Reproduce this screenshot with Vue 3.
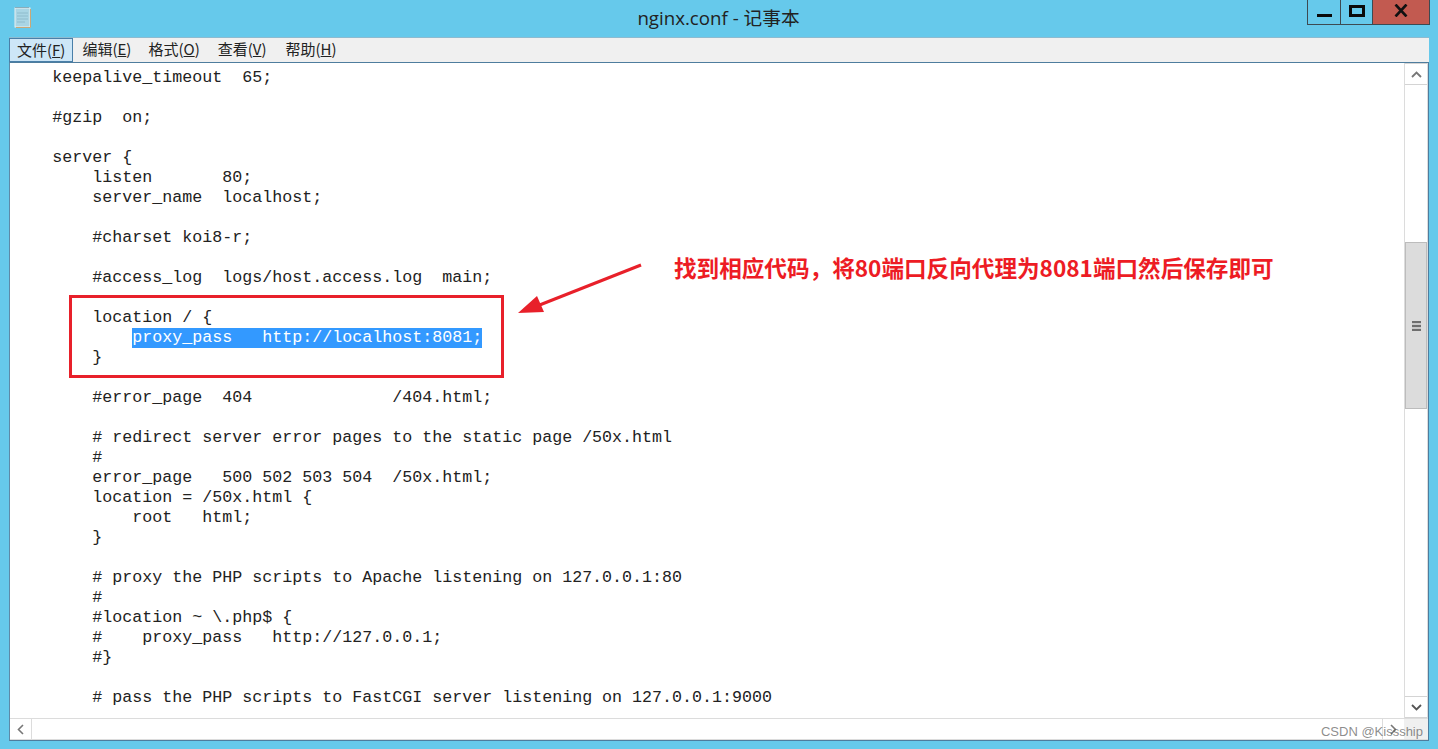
<script setup>
const menus = [
  { zh: '文件', key: 'F', active: true },
  { zh: '编辑', key: 'E' },
  { zh: '格式', key: 'O' },
  { zh: '查看', key: 'V' },
  { zh: '帮助', key: 'H' }
]
const before = [
  '    keepalive_timeout  65;', '', '    #gzip  on;', '', '    server {',
  '        listen       80;', '        server_name  localhost;', '',
  '        #charset koi8-r;', '', '        #access_log  logs/host.access.log  main;', '',
  '        location / {'
]
const indent = '            '
const selected = 'proxy_pass   http://localhost:8081;'
const after = [
  '        }', '', '        #error_page  404              /404.html;', '',
  '        # redirect server error pages to the static page /50x.html',
  '        #', '        error_page   500 502 503 504  /50x.html;',
  '        location = /50x.html {', '            root   html;', '        }', '',
  '        # proxy the PHP scripts to Apache listening on 127.0.0.1:80',
  '        #', '        #location ~ \\.php$ {', '        #    proxy_pass   http://127.0.0.1;',
  '        #}', '', '        # pass the PHP scripts to FastCGI server listening on 127.0.0.1:9000'
]
</script>

<template>
  <div class="window">
    <header class="titlebar">
      <svg class="app-icon" width="20" height="24" viewBox="0 0 20 24">
        <rect x="2" y="3" width="15" height="19" fill="#a9d5e4" stroke="#e9f0ef" />
        <path d="M17.500 4v18.500H3" fill="none" stroke="#c9a878" />
        <path d="M4 8h11M4 11h11M4 14h11M4 17h8" stroke="#8fbccc" />
        <path d="M3 3v-1M5 3v-1M7 3v-1M9 3v-1M11 3v-1M13 3v-1M15 3v-1" stroke="#6b7f88" />
      </svg>
      <div class="title">nginx.conf - 记事本</div>
      <div class="controls">
        <button class="ctl min"><span class="min-bar"></span></button>
        <button class="ctl max"><span class="max-box"></span></button>
        <button class="ctl close">
          <svg width="14" height="13" viewBox="0 0 14 13"><path d="M1.500 .5L12.500 12.500M12.500 .5L1.500 12.500" stroke="#111" stroke-width="2.600" /></svg>
        </button>
      </div>
    </header>

    <nav class="menubar">
      <div v-for="m in menus" :key="m.key" class="menu" :class="{ active: m.active }">{{ m.zh }}(<u>{{ m.key }}</u>)</div>
    </nav>

    <main class="client">
      <div class="upper">
        <div class="editor">
          <div v-for="(l, i) in before" :key="'b' + i" class="line">{{ l }}</div>
          <div class="line">{{ indent }}<span class="selected">{{ selected }}</span></div>
          <div v-for="(l, i) in after" :key="'a' + i" class="line">{{ l }}</div>
        </div>
        <aside class="vscroll">
          <div class="sb-btn">
            <svg width="11" height="7" viewBox="0 0 11 7"><path d="M1 6l4.500-4.500L10 6" fill="none" stroke="#777" stroke-width="1.800" /></svg>
          </div>
          <div class="v-track">
            <div class="v-thumb"><span class="grip"></span></div>
          </div>
          <div class="sb-btn">
            <svg width="11" height="7" viewBox="0 0 11 7"><path d="M1 1l4.500 4.500L10 1" fill="none" stroke="#555" stroke-width="1.800" /></svg>
          </div>
        </aside>
      </div>
      <div class="hscroll">
        <div class="h-btn">
          <svg width="7" height="11" viewBox="0 0 7 11"><path d="M6 1L1.500 5.500 6 10" fill="none" stroke="#777" stroke-width="1.600" /></svg>
        </div>
        <div class="h-track"></div>
        <div class="h-btn right">
          <svg width="7" height="11" viewBox="0 0 7 11"><path d="M1 1l4.500 4.500L1 10" fill="none" stroke="#777" stroke-width="1.600" /></svg>
        </div>
        <div class="corner"></div>
      </div>
    </main>

    <div class="red-box"></div>
    <svg class="arrow" width="130" height="60" viewBox="0 0 130 60">
      <path d="M125 3L16 46" stroke="#e8202a" stroke-width="3" />
      <path d="M2 51L21 34 28 50Z" fill="#e8202a" />
    </svg>
    <div class="note">找到相应代码，将80端口反向代理为8081端口然后保存即可</div>
    <div class="watermark">CSDN @Kissship</div>
  </div>
</template>

<style>
html, body { margin: 0; padding: 0; overflow: hidden; }
</style>

<style scoped>
.window {
  position: relative;
  width: 1438px;
  height: 749px;
  box-sizing: border-box;
  padding: 0 9px 8px 9px;
  background: #66c9eb;
  display: flex;
  flex-direction: column;
  overflow: hidden;
}
.titlebar { height: 37px; flex: none; position: relative; }
.app-icon { position: absolute; left: 4px; top: 5px; }
.title {
  text-align: center;
  font: 18.700px/36px "Open Sans", "Noto Sans CJK SC", sans-serif;
  color: #222;
  padding-right: 1px;
}
.controls { position: absolute; right: -1px; top: 0; display: flex; height: 25px; }
.ctl {
  box-sizing: border-box;
  height: 25px;
  padding: 0;
  background: transparent;
  border: 1px solid #3d4a52;
  border-top: 0;
  border-left-width: 0;
  display: flex;
  align-items: center;
  justify-content: center;
}
.min { width: 34px; border-left-width: 1px; }
.max { width: 32px; }
.close { width: 57px; background: #c25a50; border-left-width: 0; }
.min-bar { width: 15px; height: 3px; background: #0a0a0a; margin-top: 6px; }
.max-box { width: 16px; height: 12px; box-sizing: border-box; border: 3px solid #0a0a0a; margin-bottom: 3px; }
.close svg { margin-bottom: 4px; }

.menubar {
  flex: none;
  height: 25px;
  background: #f0f0f0;
  box-sizing: border-box;
  border-top: 1px solid #8dbbd0;
  display: flex;
  font: 15px/22px "Noto Sans CJK SC", sans-serif;
  color: #222;
}
.menu { padding: 0 9px; box-sizing: border-box; height: 24px; white-space: nowrap; }
.menu:nth-child(3) { margin-left: -1px; }
.menu:nth-child(5) { margin-left: 1px; }
.menu.active { background: #cde6f7; border: 1px solid #4a7fa8; line-height: 21px; padding: 0 7px; }

.client {
  flex: 1;
  min-height: 0;
  display: flex;
  flex-direction: column;
  background: #fff;
  border: 1px solid #4e7d9e;
  border-left-color: #5d8aa8;
  box-sizing: border-box;
}
.upper { flex: 1; min-height: 0; display: flex; }
.editor {
  flex: 1;
  min-width: 0;
  overflow: hidden;
  padding: 5px 0 0 2.400px;
  font: 16.670px/20px "Liberation Mono", monospace;
  color: #222;
}
.line { height: 20px; white-space: pre; }
.selected { display: inline-block; height: 20px; vertical-align: top; background: #3399ff; color: #fff; }

.vscroll {
  flex: none;
  width: 22px;
  display: flex;
  flex-direction: column;
  border-left: 1px solid #dcdcdc;
  border-right: 1px solid #dcdcdc;
  box-sizing: content-box;
}
.sb-btn { height: 20px; flex: none; display: flex; align-items: center; justify-content: center; border-bottom: 1px solid #d4d4d4; border-top: 1px solid #d4d4d4; background: #fff; }
.v-track { flex: 1; padding-top: 157px; box-sizing: border-box; background: #fff; }
.v-thumb {
  height: 167px;
  box-sizing: border-box;
  background: #dcdcdc;
  border: 1px solid #bcbcbc;
  display: flex;
  align-items: center;
  justify-content: center;
}
.grip {
  width: 9px;
  height: 10px;
  background: repeating-linear-gradient(#6e6e6e 0 2px, #c8c8c8 2px 4px);
}
.hscroll {
  flex: none;
  height: 20px;
  display: flex;
  border-top: 1px solid #dcdcdc;
  border-bottom: 1px solid #dcdcdc;
}
.h-btn { width: 21px; flex: none; display: flex; align-items: center; justify-content: center; border-right: 1px solid #dcdcdc; }
.h-btn.right { border-right: 0; border-left: 1px solid #dcdcdc; }
.h-track { flex: 1; }
.corner { width: 24px; flex: none; background: #f0f0f0; }

.red-box {
  position: absolute;
  left: 69px;
  top: 295px;
  width: 435px;
  height: 83px;
  box-sizing: border-box;
  border: 3px solid #e8202a;
}
.arrow { position: absolute; left: 516px; top: 262px; }
.note {
  position: absolute;
  left: 674px;
  top: 252px;
  font: 700 22.600px/32px "Noto Sans CJK SC", sans-serif;
  color: #ed1c24;
  white-space: nowrap;
}
.watermark {
  position: absolute;
  right: 15px;
  top: 723px;
  font: 13px/18px "Liberation Sans", sans-serif;
  color: rgba(90, 90, 90, 0.7);
  white-space: nowrap;
}
</style>
